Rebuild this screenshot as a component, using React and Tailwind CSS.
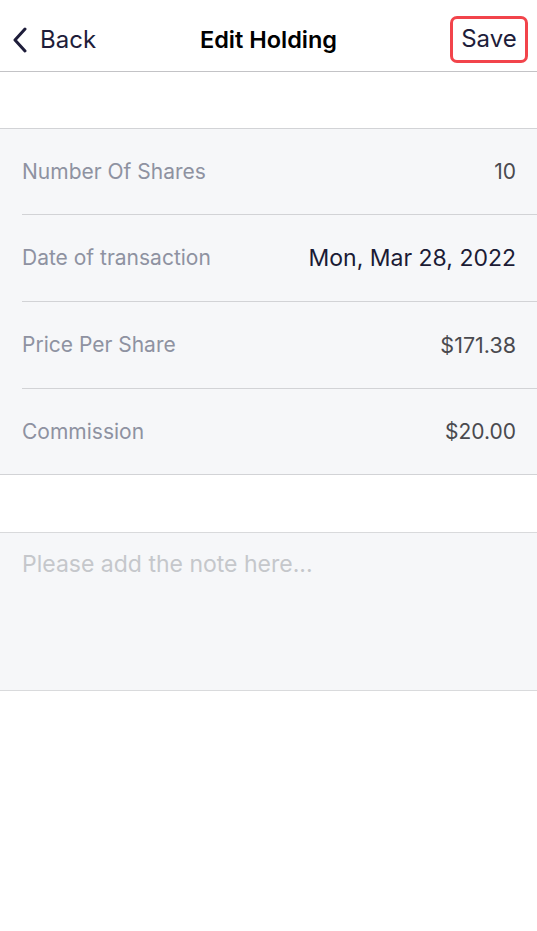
export default function App() {
  const rows = [
    { label: "Number Of Shares", value: "10", cls: "text-[21px] text-[#4a4a4f]", h: "h-[86px] border-b" },
    { label: "Date of transaction", value: "Mon, Mar 28, 2022", cls: "text-[23px] text-[#1b1b35]", h: "h-[87px] border-b" },
    { label: "Price Per Share", value: "$171.38", cls: "text-[21.5px] text-[#4a4a4f]", h: "h-[87px] border-b" },
    { label: "Commission", value: "$20.00", cls: "text-[21px] text-[#4a4a4f]", h: "h-[85px]" },
  ];
  return (
    <div className="w-[537px] h-[931px] bg-white" style={{ fontFamily: "Inter, 'Noto Sans', sans-serif" }}>
      <div className="h-[72px] flex items-center justify-between border-b border-[#c3c3c6] pl-[11px] pr-[9px] pt-[9px] relative">
        <div className="flex items-center gap-[11px] text-[#1e1d3a]">
          <svg width="18" height="26" viewBox="0 0 18 26" fill="none">
            <path d="M14 2 L4 13 L14 24" stroke="#1e1d3a" strokeWidth="3" strokeLinecap="round" strokeLinejoin="round" />
          </svg>
          <span className="text-[24px] leading-none">Back</span>
        </div>
        <div className="absolute left-0 right-0 top-[9px] bottom-0 flex items-center justify-center text-[23.5px] font-semibold text-black pointer-events-none">Edit Holding</div>
        <div className="border-[3px] border-[#f2444b] rounded-[7px] h-[47px] w-[78px] flex items-center justify-center text-[24px] text-[#1e1d3a] mt-[-2px]">Save</div>
      </div>
      <div className="h-[56px]" />
      <div className="bg-[#f6f7f9] border-y border-[#d2d3d6]">
        {rows.map((r, i) => (
          <div key={i} className="pl-[22px]">
            <div className={`${r.h} flex items-center justify-between pr-[21px] border-[#d2d3d6]`}>
              <span className="text-[21px] text-[#8e92a1]">{r.label}</span>
              <span className={r.cls}>{r.value}</span>
            </div>
          </div>
        ))}
      </div>
      <div className="h-[57px]" />
      <div className="bg-[#f6f7f9] border-y border-[#d9dadc] h-[159px] px-[22px] pt-[14px]">
        <span className="text-[23px] text-[#c5c7cb]">Please add the note here...</span>
      </div>
    </div>
  );
}
